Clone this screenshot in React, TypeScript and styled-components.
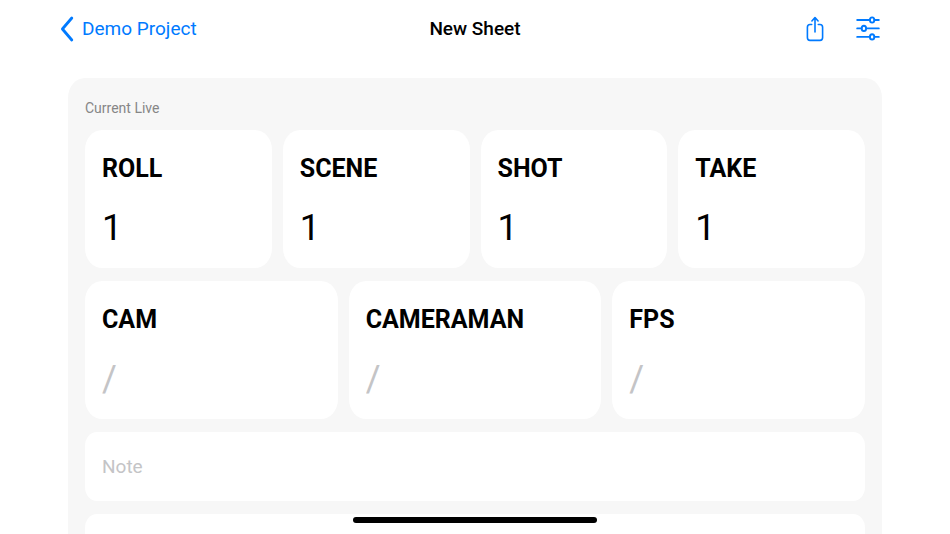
import React, { useId, useState } from "react";
import styled, { createGlobalStyle } from "styled-components";

const GlobalStyle = createGlobalStyle`
  * { box-sizing: border-box; }
  body {
    margin: 0;
    background: #fff;
    color: #000;
    font-family: Roboto, "Liberation Sans", sans-serif;
  }
`;

const Screen = styled.div`
  display: flex;
  flex-direction: column;
  height: 100vh;
  overflow: hidden;
`;

const NavBar = styled.header`
  display: grid;
  grid-template-columns: 1fr auto 1fr;
  align-items: center;
  flex: none;
  height: 58px;
  padding: 0 60px;
`;

const BackLink = styled.a`
  display: inline-flex;
  align-items: center;
  justify-self: start;
  gap: 8px;
  color: #007aff;
  font-size: 19px;
  line-height: 24px;
  text-decoration: none;
`;

const Title = styled.h1`
  margin: 0;
  font-size: 19px;
  font-weight: 500;
  line-height: 24px;
`;

const Actions = styled.div`
  display: flex;
  justify-self: end;
  gap: 30px;
  padding: 0 10px 2px 0;
`;

const IconButton = styled.button`
  display: flex;
  padding: 0;
  border: 0;
  background: none;
  color: #007aff;
  cursor: pointer;
`;

const Scroller = styled.main`
  flex: 1;
  min-height: 0;
  padding: 20px 68px 0;
  overflow-y: auto;
  scrollbar-width: none;
`;

const Panel = styled.section`
  display: flex;
  flex-direction: column;
  gap: 13px;
  padding: 21px 17px 40px;
  border-radius: 17px / 20px;
  background: #f7f7f7;
`;

const PanelHeading = styled.h2`
  margin: 0;
  color: #868686;
  font-size: 14px;
  font-weight: 400;
  line-height: 18px;
`;

const CardRow = styled.div<{ $columns: number }>`
  display: grid;
  grid-template-columns: repeat(${(p) => p.$columns}, minmax(0, 1fr));
  gap: 11px;
`;

const Card = styled.div`
  display: flex;
  flex-direction: column;
  gap: 18px;
  padding: 20px 17px 18px;
  border-radius: 17px / 20px;
  background: #fff;
`;

const CardLabel = styled.label`
  font-size: 25px;
  font-weight: 700;
  line-height: 38px;
`;

const CardInput = styled.input`
  width: 100%;
  height: 44px;
  padding: 0;
  border: 0;
  outline: 0;
  background: none;
  color: #000;
  font: 400 36px/44px Roboto, "Liberation Sans", sans-serif;

  &::placeholder {
    color: #c4c4c6;
    opacity: 1;
  }
`;

const TextRow = styled.input`
  width: 100%;
  height: 69px;
  padding: 0 17px;
  border: 0;
  border-radius: 12px / 14px;
  outline: 0;
  background: #fff;
  font: 400 19px/24px Roboto, "Liberation Sans", sans-serif;

  &::placeholder {
    color: #c4c4c6;
    opacity: 1;
  }
`;

const HomeIndicator = styled.div`
  position: fixed;
  bottom: 11px;
  left: 50%;
  width: 244px;
  height: 6px;
  margin-left: -122px;
  border-radius: 3px;
  background: #000;
`;

function ChevronIcon() {
  return (
    <svg width="14" height="26" viewBox="0 0 14 26" fill="none" stroke="currentColor" strokeWidth="2.8" strokeLinecap="round" strokeLinejoin="round" aria-hidden="true">
      <path d="M11.8 2 2.4 13l9.4 11" />
    </svg>
  );
}

function ShareIcon() {
  return (
    <svg width="22" height="28" viewBox="0 0 22 28" fill="none" stroke="currentColor" strokeWidth="1.6" strokeLinecap="round" strokeLinejoin="round" aria-hidden="true">
      <path d="M7.7 10.5H6Q3.4 10.5 3.4 13.3v10.2Q3.4 26.4 6 26.4h10q2.6 0 2.6-2.9V13.3q0-2.8-2.6-2.8h-1.7" />
      <path d="M11 18V4M7.9 7 11 3.5 14.1 7" />
    </svg>
  );
}

function SlidersIcon() {
  return (
    <svg width="24" height="28" viewBox="0 0 24 28" fill="none" stroke="currentColor" strokeWidth="1.9" strokeLinecap="round" aria-hidden="true">
      <path d="M1.2 6H13.6M18.6 6h4.2M1.2 14.4h4.2M10.4 14.4h12.4M1.2 22.9h12.4M18.6 22.9h4.2" />
      <ellipse cx="16.1" cy="6" rx="2.2" ry="2.6" />
      <ellipse cx="7.9" cy="14.4" rx="2.2" ry="2.6" />
      <ellipse cx="16.1" cy="22.9" rx="2.2" ry="2.6" />
    </svg>
  );
}

function FieldCard({ label, initial = "" }: { label: string; initial?: string }) {
  const id = useId();
  const [value, setValue] = useState(initial);
  return (
    <Card>
      <CardLabel htmlFor={id}>{label}</CardLabel>
      <CardInput id={id} value={value} placeholder="/" onChange={(e) => setValue(e.target.value)} />
    </Card>
  );
}

const counters = ["ROLL", "SCENE", "SHOT", "TAKE"];
const details = ["CAM", "CAMERAMAN", "FPS"];

export default function App() {
  return (
    <>
      <GlobalStyle />
      <Screen>
        <NavBar>
          <BackLink href="#project">
            <ChevronIcon />
            Demo Project
          </BackLink>
          <Title>New Sheet</Title>
          <Actions>
            <IconButton type="button" aria-label="Share">
              <ShareIcon />
            </IconButton>
            <IconButton type="button" aria-label="Settings">
              <SlidersIcon />
            </IconButton>
          </Actions>
        </NavBar>
        <Scroller>
          <Panel>
            <PanelHeading>Current Live</PanelHeading>
            <CardRow $columns={4}>
              {counters.map((label) => (
                <FieldCard key={label} label={label} initial="1" />
              ))}
            </CardRow>
            <CardRow $columns={3}>
              {details.map((label) => (
                <FieldCard key={label} label={label} />
              ))}
            </CardRow>
            <TextRow aria-label="Note" placeholder="Note" />
            <TextRow aria-label="Additional note" />
          </Panel>
        </Scroller>
        <HomeIndicator />
      </Screen>
    </>
  );
}
